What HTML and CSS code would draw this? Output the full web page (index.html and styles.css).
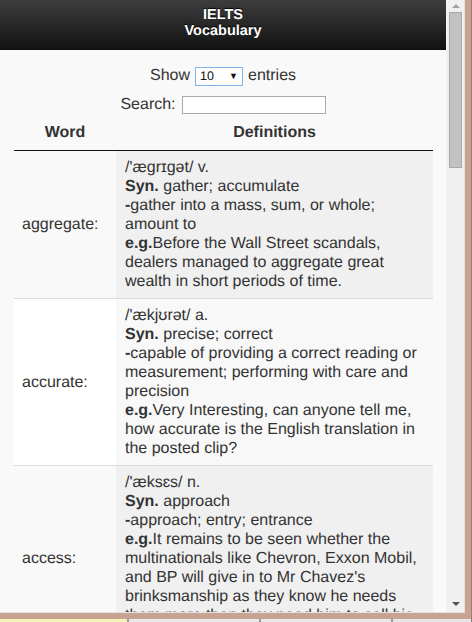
FILE: index.html
```html
<!DOCTYPE html>
<html>
<head>
<meta charset="utf-8">
<title>IELTS Vocabulary</title>
<link rel="stylesheet" href="styles.css">
</head>
<body>
<div class="desktop">
  <div class="window">
    <div class="viewport">
      <header class="bar">
        <h1 class="title">IELTS<br>Vocabulary</h1>
      </header>
      <div class="content">
        <div class="controls">
          <label class="length">Show
            <span class="select"><span class="select-val">10</span><span class="select-arrow">▼</span></span>
            entries</label>
          <label class="filter">Search: <span class="search-input"></span></label>
        </div>
        <table class="vocab">
          <colgroup><col class="col-word"><col class="col-def"></colgroup>
          <thead>
            <tr><th>Word</th><th>Definitions</th></tr>
          </thead>
          <tbody>
            <tr class="odd">
              <td class="word">aggregate:</td>
              <td class="def">/'ægrɪgət/ v.<br><b>Syn.</b> gather; accumulate<br><b>-</b>gather into a mass, sum, or whole; amount to<br><b>e.g.</b>Before the Wall Street scandals, dealers managed to aggregate great wealth in short periods of time.</td>
            </tr>
            <tr class="even">
              <td class="word">accurate:</td>
              <td class="def">/'ækjʊrət/ a.<br><b>Syn.</b> precise; correct<br><b>-</b>capable of providing a correct reading or measurement; performing with care and precision<br><b>e.g.</b>Very Interesting, can anyone tell me, how accurate is the English translation in the posted clip?</td>
            </tr>
            <tr class="odd">
              <td class="word">access:</td>
              <td class="def">/'æksɛs/ n.<br><b>Syn.</b> approach<br><b>-</b>approach; entry; entrance<br><b>e.g.</b>It remains to be seen whether the multinationals like Chevron, Exxon Mobil, and BP will give in to Mr Chavez's brinksmanship as they know he needs them more than they need him to sell his oil.</td>
            </tr>
          </tbody>
        </table>
      </div>
    </div>
    <div class="scrollbar">
      <span class="arrow-up"></span>
      <span class="thumb"></span>
      <span class="track-fill"></span>
      <span class="arrow-down"></span>
    </div>
  </div>
  <div class="taskstrip">
    <span class="task task-active"></span>
    <span class="task"></span>
    <span class="task"></span>
  </div>
</div>
</body>
</html>
```

FILE: styles.css
```css
html, body {
  margin: 0;
  padding: 0;
}
body {
  width: 472px;
  height: 622px;
  overflow: hidden;
  background: #c9a291;
  font-family: "Liberation Sans", Arial, sans-serif;
  text-rendering: geometricPrecision;
}
.desktop {
  width: 472px;
  height: 622px;
  border-right: 1px solid #9c7a6c;
  box-sizing: border-box;
  display: flex;
  flex-direction: column;
}
.window {
  width: 465px;
  height: 613px;
  box-sizing: border-box;
  border-right: 1px solid #e2e2e2;
  border-bottom: 1px solid #e2e2e2;
  display: flex;
  flex: none;
}
.viewport {
  width: 446px;
  height: 612px;
  overflow: hidden;
  background: #f9f9f9;
  flex: none;
}
.bar {
  height: 50px;
  box-sizing: border-box;
  background: linear-gradient(#3d3d3d, #121212);
  border-bottom: 1px solid #0c0c0c;
  padding-top: 7px;
}
.title {
  margin: 0;
  text-align: center;
  color: #fff;
  font-size: 14.5px;
  line-height: 16px;
  font-weight: bold;
  text-shadow: 0 -1px 1px #000;
}
.content {
  color: #333;
  font-size: 16px;
}
.controls {
  display: flex;
  flex-direction: column;
  align-items: center;
  padding-top: 16px;
}
.length, .filter {
  display: flex;
  align-items: center;
  height: 20px;
  gap: 5px;
}
.filter {
  margin-top: 9px;
  gap: 6px;
}
.select {
  width: 48px;
  height: 19px;
  box-sizing: border-box;
  border: 1px solid #7eb4ea;
  background: #fff;
  display: flex;
  align-items: center;
  justify-content: space-between;
  padding: 0 4px 0 4px;
  font-size: 12.5px;
  color: #111;
}
.select-arrow {
  font-size: 9px;
  color: #111;
}
.search-input {
  display: block;
  width: 144px;
  height: 18px;
  box-sizing: border-box;
  border: 1px solid #a9a9a9;
  background: #fff;
}
.vocab {
  margin-left: 14px;
  width: 419px;
  border-collapse: collapse;
  table-layout: fixed;
  line-height: 19px;
}
.col-word { width: 102px; }
.col-def { width: 317px; }
.vocab th {
  font-weight: bold;
  text-align: center;
  padding: 8px 4px 8px;
  line-height: 19px;
  border-bottom: 1px solid #111;
}
.vocab td {
  padding: 7px 9px 7px 8px;
  border-top: 1px solid #dddddd;
  vertical-align: middle;
  overflow: hidden;
}
.vocab tbody tr:first-child td {
  border-top: none;
}
.vocab td.def {
  padding-left: 9px;
  padding-right: 8px;
}
.odd .word { background: #f9f9f9; }
.odd .def { background: #f0f0f0; }
.even .word { background: #ffffff; }
.even .def { background: #f8f8f8; }
.vocab b { color: #333; }
.scrollbar {
  width: 18px;
  height: 612px;
  background: #f0f0f0;
  flex: none;
  border-left: 1px solid #f6f6f6;
  box-sizing: border-box;
  display: flex;
  flex-direction: column;
  align-items: center;
}
.arrow-up {
  margin-top: 4px;
  width: 0;
  height: 0;
  border-left: 4px solid transparent;
  border-right: 4px solid transparent;
  border-bottom: 4px solid #a3a3a3;
}
.thumb {
  margin-top: 4px;
  width: 13px;
  height: 156px;
  box-sizing: border-box;
  background: #c2c2c2;
  border: 1px solid #a9a9a9;
}
.track-fill {
  flex: 1;
}
.arrow-down {
  margin-bottom: 6px;
  width: 0;
  height: 0;
  border-left: 4px solid transparent;
  border-right: 4px solid transparent;
  border-top: 4px solid #505050;
}
.taskstrip {
  margin-top: 6px;
  height: 3px;
  display: flex;
  background: #e6e6e6;
}
.task {
  width: 130px;
  border-right: 2px solid #9a9a9a;
  background: #e9e9e9;
}
.task-active {
  width: 127px;
  background: #f6f3b8;
}
```
